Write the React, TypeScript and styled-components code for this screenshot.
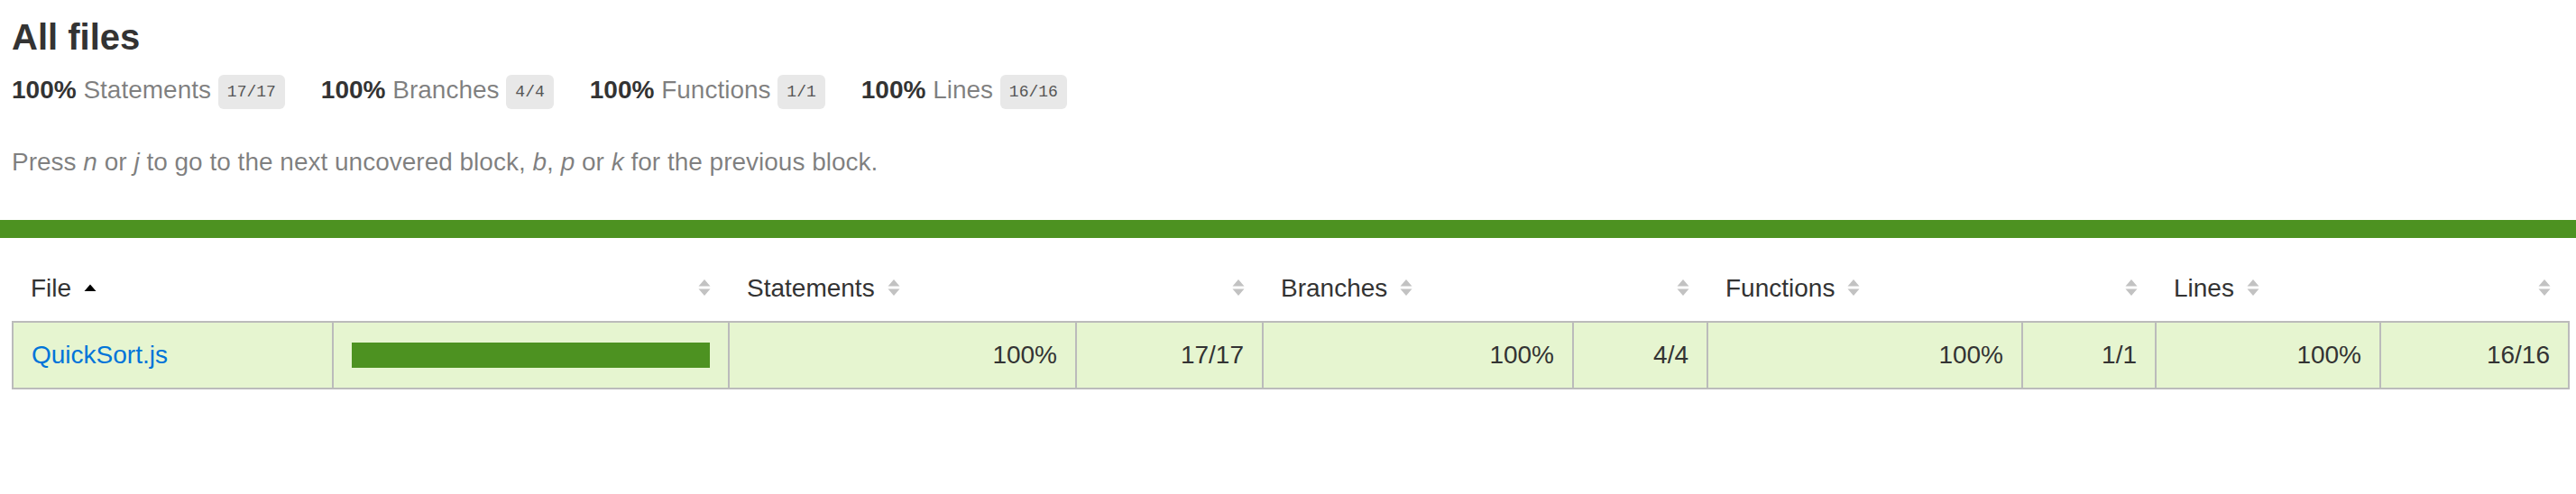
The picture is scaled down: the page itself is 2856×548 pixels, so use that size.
import React from "react";
import styled, { createGlobalStyle } from "styled-components";

const GlobalStyle = createGlobalStyle`
  *, *::before, *::after { box-sizing: border-box; }
  html, body { margin: 0; padding: 0; background: #fff; }
  body {
    font-family: "Liberation Sans", Arial, Helvetica, sans-serif;
    font-size: 28px;
    line-height: 32px;
    color: #333;
  }
`;

const Page = styled.div`
  width: 100%;
`;

const Header = styled.header`
  padding: 18px 9px 20px 13px;
`;

const Title = styled.h1`
  margin: 0;
  font-size: 40px;
  font-weight: bold;
  line-height: 46px;
`;

const Summary = styled.div`
  display: flex;
  padding: 20px 0;
`;

const Metric = styled.div`
  padding-right: 40px;
  white-space: nowrap;
`;

const Strong = styled.span`
  font-weight: bold;
`;

const Quiet = styled.span`
  color: rgba(0, 0, 0, 0.5);
`;

const Fraction = styled.span`
  font-family: "Liberation Mono", "DejaVu Sans Mono", monospace;
  font-size: 18px;
  line-height: normal;
  color: #555;
  background: #e8e8e8;
  padding: 9px 10px;
  border-radius: 6px;
  vertical-align: middle;
`;

const Hint = styled.p`
  margin: 28px 0;
  color: rgba(0, 0, 0, 0.5);
`;

const StatusLine = styled.div<{ $level: "high" | "low" }>`
  height: 20px;
  background: ${(p) => (p.$level === "high" ? "rgb(77,146,33)" : "#C21F39")};
`;

const TableSection = styled.section`
  padding: 20px 9px 20px 13px;
`;

const Table = styled.table`
  width: 100%;
  border-collapse: collapse;
  table-layout: fixed;
`;

const Col = styled.col<{ $w: number }>`
  width: ${(p) => p.$w}px;
`;

const HeadRow = styled.tr`
  border-bottom: 2px solid #bbb;
`;

const Th = styled.th<{ $align: "left" | "right" }>`
  padding: 20px;
  font-weight: normal;
  white-space: nowrap;
  text-align: ${(p) => p.$align};
`;

const TBody = styled.tbody`
  border: 2px solid #bbb;
`;

const Row = styled.tr`
  border-bottom: 2px solid #bbb;
`;

const Td = styled.td<{ $align: "left" | "right" }>`
  padding: 20px;
  border-right: 2px solid #bbb;
  background: rgb(230, 245, 208);
  white-space: nowrap;
  text-align: ${(p) => p.$align};
  &:last-child {
    border-right: none;
  }
`;

const FileLink = styled.a`
  color: #0074d9;
  text-decoration: none;
`;

const Chart = styled.div`
  line-height: 0;
  border: 2px solid rgb(77, 146, 33);
  background: #fff;
`;

const Fill = styled.div`
  height: 24px;
  background: rgb(77, 146, 33);
`;

const SorterSvg = styled.svg`
  display: inline-block;
  width: 14px;
  height: 20px;
  margin-left: 14px;
  vertical-align: baseline;
`;

function Sorter({ sorted }: { sorted?: boolean }) {
  return (
    <SorterSvg viewBox="0 0 14 20" aria-hidden="true">
      {sorted ? (
        <polygon points="0.5,14 7,6.5 13.5,14" fill="#000" />
      ) : (
        <>
          <polygon points="0.5,8.5 7,1 13.5,8.5" fill="#c2c2c2" />
          <polygon points="0.5,11.5 7,19 13.5,11.5" fill="#c2c2c2" />
        </>
      )}
    </SorterSvg>
  );
}

const metrics = [
  { label: "Statements", pct: "100%", frac: "17/17" },
  { label: "Branches", pct: "100%", frac: "4/4" },
  { label: "Functions", pct: "100%", frac: "1/1" },
  { label: "Lines", pct: "100%", frac: "16/16" },
];

const colWidths = [355, 439, 385, 207, 344, 149, 349, 148, 249, 209];

const files = [
  {
    name: "QuickSort.js",
    cover: 100,
    stats: [
      { pct: "100%", abs: "17/17" },
      { pct: "100%", abs: "4/4" },
      { pct: "100%", abs: "1/1" },
      { pct: "100%", abs: "16/16" },
    ],
  },
];

export default function App() {
  return (
    <Page>
      <GlobalStyle />
      <Header>
        <Title>All files</Title>
        <Summary>
          {metrics.map((m) => (
            <Metric key={m.label}>
              <Strong>{m.pct}</Strong> <Quiet>{m.label}</Quiet> <Fraction>{m.frac}</Fraction>
            </Metric>
          ))}
        </Summary>
        <Hint>
          Press <em>n</em> or <em>j</em> to go to the next uncovered block, <em>b</em>, <em>p</em> or{" "}
          <em>k</em> for the previous block.
        </Hint>
      </Header>
      <StatusLine $level="high" />
      <TableSection>
        <Table>
          <colgroup>
            {colWidths.map((w, i) => (
              <Col key={i} $w={w} />
            ))}
          </colgroup>
          <thead>
            <HeadRow>
              <Th $align="left">
                File<Sorter sorted />
              </Th>
              <Th $align="right">
                <Sorter />
              </Th>
              {metrics.map((m) => (
                <React.Fragment key={m.label}>
                  <Th $align="left">
                    {m.label}
                    <Sorter />
                  </Th>
                  <Th $align="right">
                    <Sorter />
                  </Th>
                </React.Fragment>
              ))}
            </HeadRow>
          </thead>
          <TBody>
            {files.map((f) => (
              <Row key={f.name}>
                <Td $align="left">
                  <FileLink href="#">{f.name}</FileLink>
                </Td>
                <Td $align="left">
                  <Chart>
                    <Fill style={{ width: `${f.cover}%` }} />
                  </Chart>
                </Td>
                {f.stats.map((s, i) => (
                  <React.Fragment key={i}>
                    <Td $align="right">{s.pct}</Td>
                    <Td $align="right">{s.abs}</Td>
                  </React.Fragment>
                ))}
              </Row>
            ))}
          </TBody>
        </Table>
      </TableSection>
    </Page>
  );
}
